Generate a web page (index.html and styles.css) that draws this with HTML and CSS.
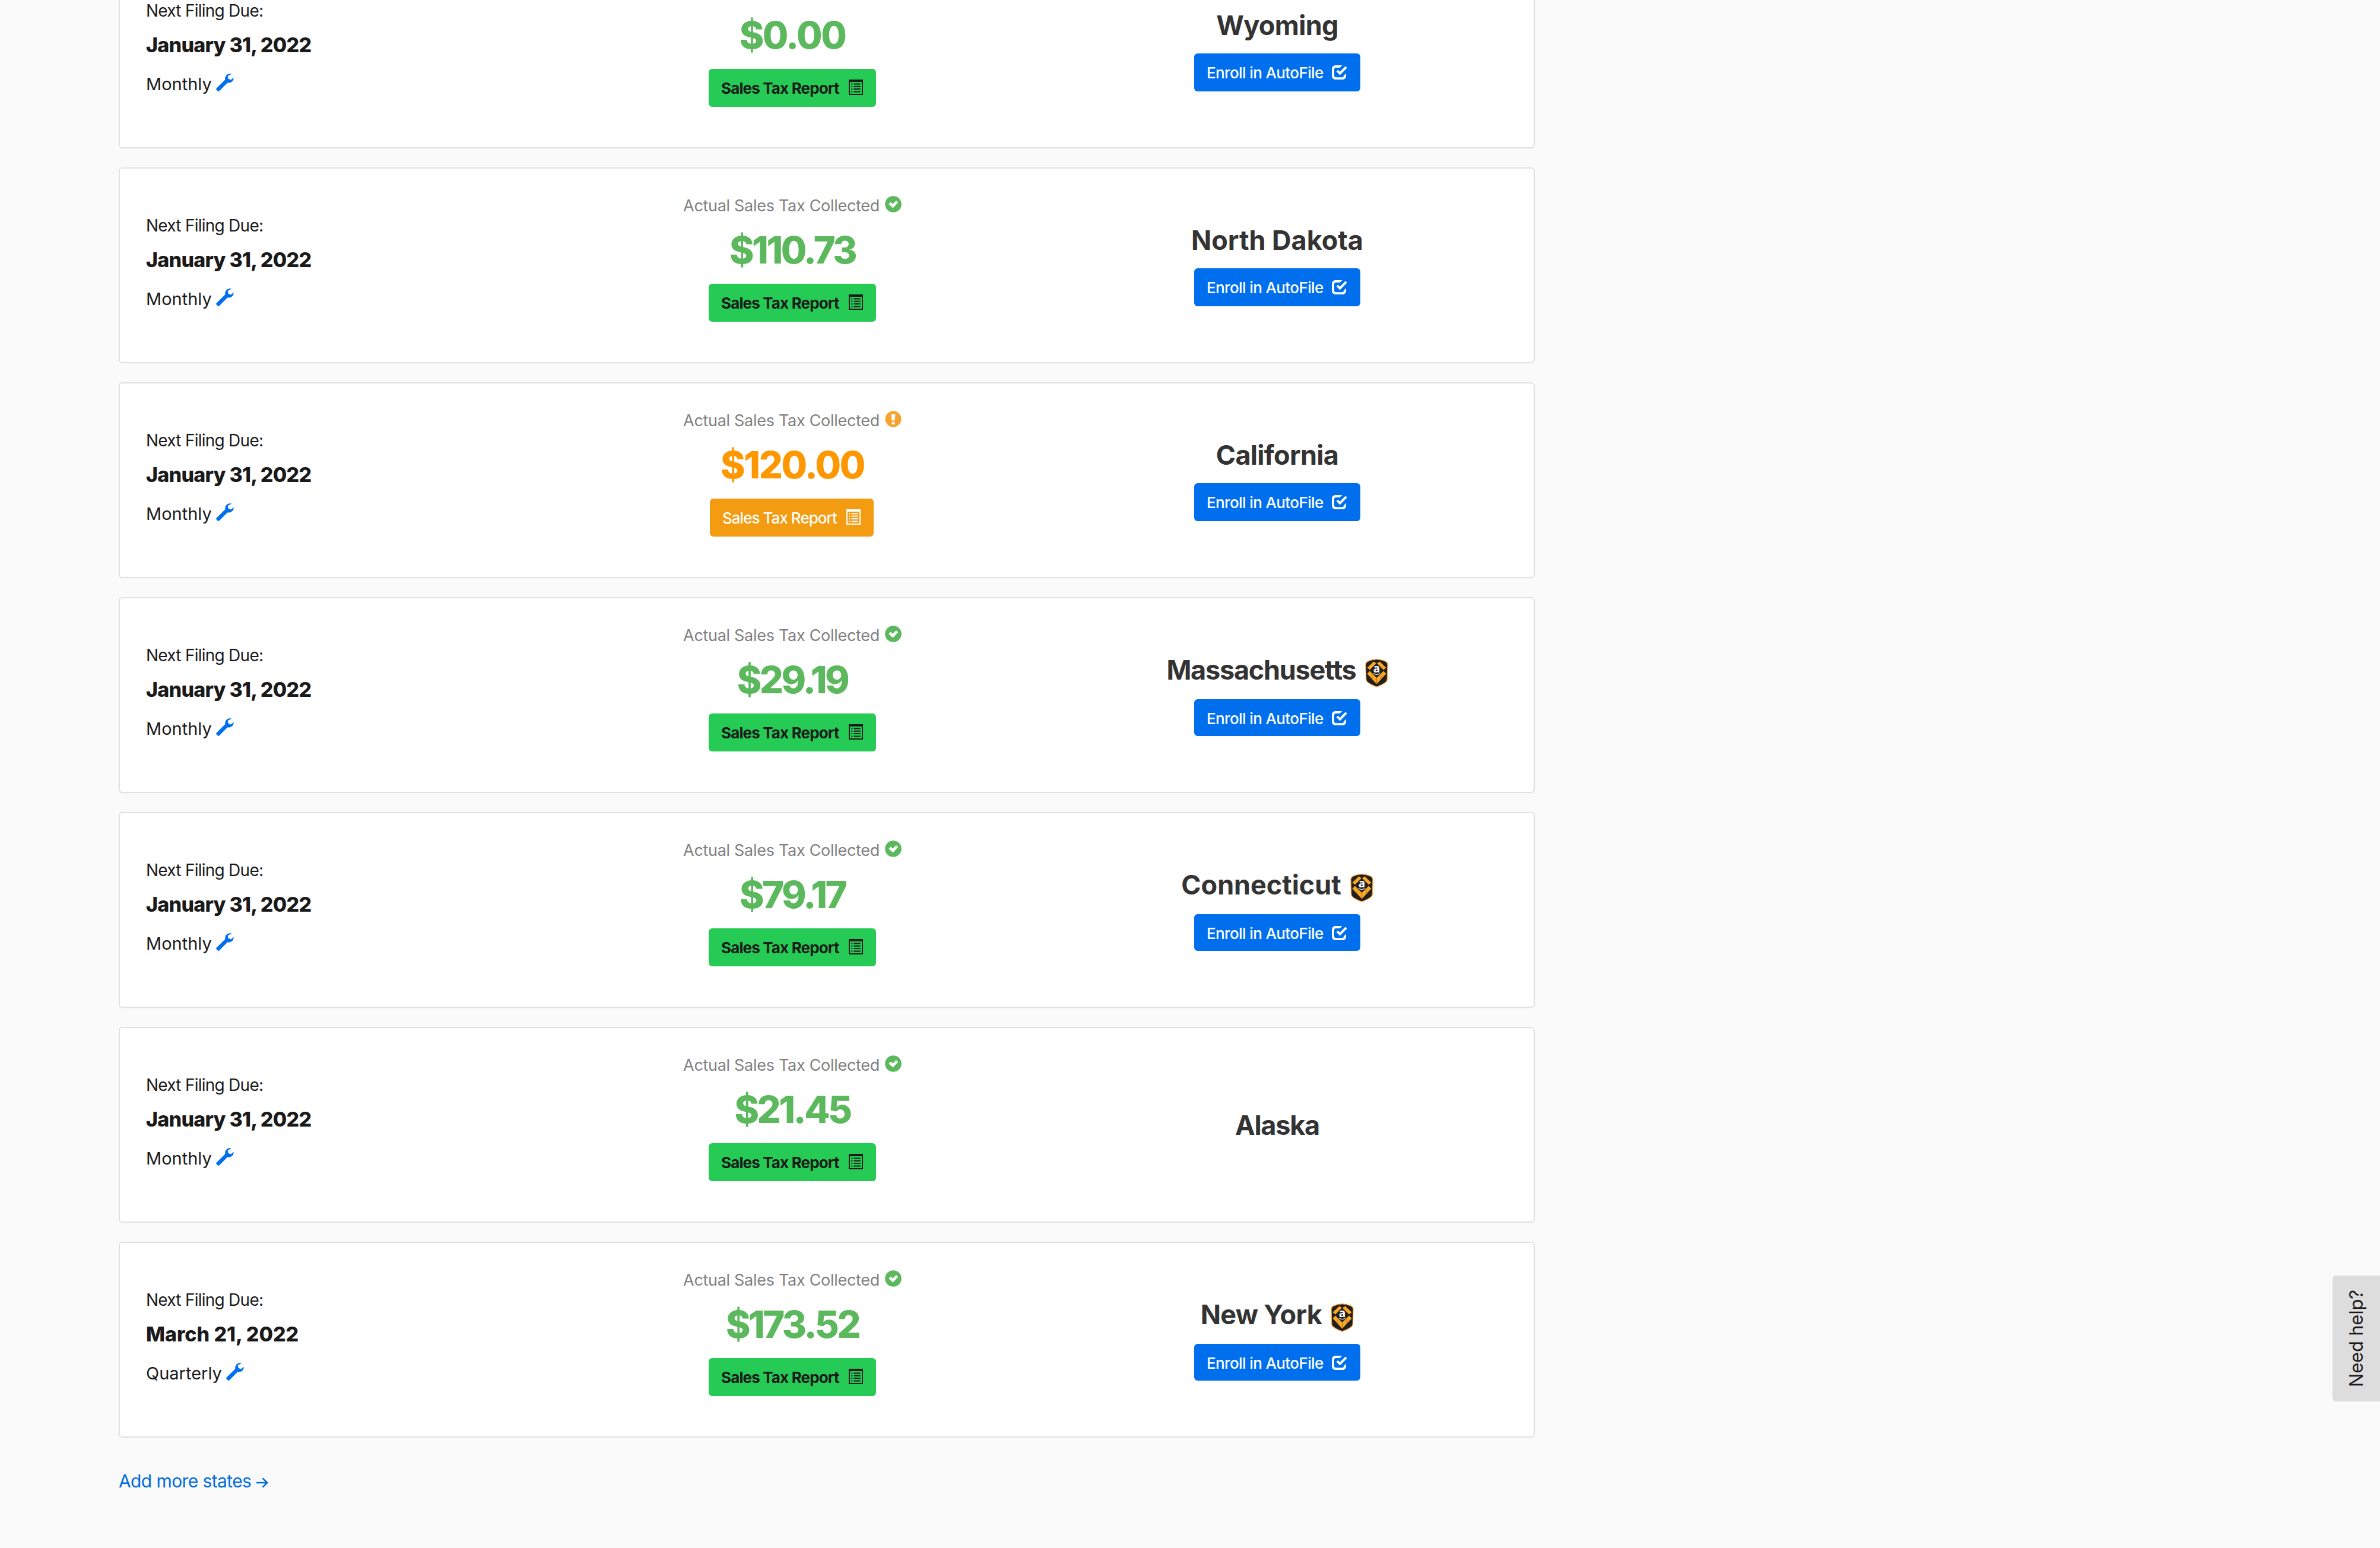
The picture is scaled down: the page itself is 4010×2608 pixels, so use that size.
FILE: index.html
```
<!DOCTYPE html>
<html lang="en">
<head>
    <meta charset="UTF-8">
    <meta name="viewport" content="width=device-width, initial-scale=1.0">
    <title>Sales Tax Filings</title>
    <link rel="stylesheet" href="styles.css">
</head>
<body>
    <!-- Shared icons -->
    <svg class="icon-defs">
        <symbol id="wrench" viewBox="0 0 30 30">
            <path d="M26 .7C21-1 14.6 2.4 15.3 10.2L.9 24.6c-1 1-.9 1.9-.1 2.7l2 2c.8.8 1.8.8 2.7-.1L19.2 15.4C25.4 16.4 30.2 12 29.6 6.8L25 10.6l-4.4-1.8-.9-4.5z"/>
        </symbol>
        <symbol id="list" viewBox="0 0 24 26">
            <path fill-rule="evenodd" d="M0 0h24v26H0zM2 4v20h20V4z"/>
            <path d="M4.3 6.5h2v2h-2zM8.5 6.5h11.2v2H8.5zM4.3 10.8h2v2h-2zM8.5 10.8h11.2v2H8.5zM4.3 15.1h2v2h-2zM8.5 15.1h11.2v2H8.5zM4.3 19.4h2v2h-2zM8.5 19.4h11.2v2H8.5z"/>
        </symbol>
        <symbol id="ok" viewBox="0 0 28 28">
            <circle cx="14" cy="14" r="13.8"/>
            <path fill="#fff" d="M6.3 14l3.6-3.5 3.3 3.2L18.9 8l3.4 3.3-8.8 9.3z"/>
        </symbol>
        <symbol id="alert" viewBox="0 0 28 28">
            <circle cx="14" cy="14" r="13.5"/>
            <path fill="#fff" d="M10.5 6h7l-1.2 10.5h-4.6zM11.6 18.8h4.8v4.2h-4.8z"/>
        </symbol>
        <symbol id="check" viewBox="0 0 26 24">
            <path d="M17.5 0H7C2.5 0 0 2.5 0 7v10c0 4.5 2.5 7 7 7h10.500c4.500 0 6.500-2.500 6.500-6.500V13.500l-4 4c0 2-.8 2.700-2.500 2.700H7c-2 0-3-1-3-3V7c0-2 1-3 3-3h6.500z"/>
            <path d="M7.600 10.500l2.700-2.700 3.300 3.300 9.300-9.600L25.700 4.300 13.600 16.500z"/>
        </symbol>
        <symbol id="shield" viewBox="0 0 39 48">
            <path fill="#231f20" stroke="#f0a33a" stroke-width="1.3" d="M19.500.8c6 0 10.500 1.500 14.500 3.400 2.800 1.300 4 3 4 6L37.300 34c-.1 2.700-.9 4.300-3 5.700-4.200 3-9 5.500-14.800 7.500C13.700 45.200 8.900 42.700 4.700 39.700c-2.100-1.400-2.900-3-3-5.700L1 10.200c0-3 1.200-4.700 4-6C9 2.300 13.500.8 19.500.8z"/>
            <path fill="#f9a825" d="M14.5 4.500l4.500 3L8 18.500l-4.500-3.500zM24.500 4.500l-4.500 3L31 18.500l4.500-3.500zM8 20.500L19.500 32 31 20.500l4.500 4.500-16 17.500L3.500 25z"/>
            <path stroke="#a8670f" stroke-width=".8" fill="none" d="M19.500 32v10M12 27v6M27 27v6"/>
            <path stroke="#fff" stroke-width="1.2" fill="none" d="M14 24.500q5.500 4 11 0"/>
            <text x="19.500" y="22.500" fill="#fff" class="shield-letter">a</text>
        </symbol>
    </svg>

    <div class="filings">
        <div class="card">
            <div class="due">
                <div class="due-label">Next Filing Due:</div>
                <div class="due-date">January 31, 2022</div>
                <div class="frequency">Monthly <svg class="wrench"><use href="#wrench"/></svg></div>
            </div>
            <div class="collected no-label">
                <div class="amount amount-round">$0.00</div>
                <a class="btn btn-green"><span>Sales Tax Report</span><svg class="list"><use href="#list"/></svg></a>
            </div>
            <div class="state">
                <div class="state-name">Wyoming</div>
                <a class="btn btn-blue"><span>Enroll in AutoFile</span><svg class="check"><use href="#check"/></svg></a>
            </div>
        </div>

        <div class="card">
            <div class="due">
                <div class="due-label">Next Filing Due:</div>
                <div class="due-date">January 31, 2022</div>
                <div class="frequency">Monthly <svg class="wrench"><use href="#wrench"/></svg></div>
            </div>
            <div class="collected">
                <div class="collected-label">Actual Sales Tax Collected <svg class="status"><use href="#ok"/></svg></div>
                <div class="amount">$110.73</div>
                <a class="btn btn-green"><span>Sales Tax Report</span><svg class="list"><use href="#list"/></svg></a>
            </div>
            <div class="state">
                <div class="state-name state-name-wide">North Dakota</div>
                <a class="btn btn-blue"><span>Enroll in AutoFile</span><svg class="check"><use href="#check"/></svg></a>
            </div>
        </div>

        <div class="card">
            <div class="due">
                <div class="due-label">Next Filing Due:</div>
                <div class="due-date">January 31, 2022</div>
                <div class="frequency">Monthly <svg class="wrench"><use href="#wrench"/></svg></div>
            </div>
            <div class="collected warning">
                <div class="collected-label">Actual Sales Tax Collected <svg class="status"><use href="#alert"/></svg></div>
                <div class="amount amount-round">$120.00</div>
                <a class="btn btn-orange"><span>Sales Tax Report</span><svg class="list"><use href="#list"/></svg></a>
            </div>
            <div class="state">
                <div class="state-name">California</div>
                <a class="btn btn-blue"><span>Enroll in AutoFile</span><svg class="check"><use href="#check"/></svg></a>
            </div>
        </div>

        <div class="card">
            <div class="due">
                <div class="due-label">Next Filing Due:</div>
                <div class="due-date">January 31, 2022</div>
                <div class="frequency">Monthly <svg class="wrench"><use href="#wrench"/></svg></div>
            </div>
            <div class="collected">
                <div class="collected-label">Actual Sales Tax Collected <svg class="status"><use href="#ok"/></svg></div>
                <div class="amount">$29.19</div>
                <a class="btn btn-green"><span>Sales Tax Report</span><svg class="list"><use href="#list"/></svg></a>
            </div>
            <div class="state has-shield">
                <div class="state-name state-name-tight">Massachusetts <svg class="shield"><use href="#shield"/></svg></div>
                <a class="btn btn-blue"><span>Enroll in AutoFile</span><svg class="check"><use href="#check"/></svg></a>
            </div>
        </div>

        <div class="card">
            <div class="due">
                <div class="due-label">Next Filing Due:</div>
                <div class="due-date">January 31, 2022</div>
                <div class="frequency">Monthly <svg class="wrench"><use href="#wrench"/></svg></div>
            </div>
            <div class="collected">
                <div class="collected-label">Actual Sales Tax Collected <svg class="status"><use href="#ok"/></svg></div>
                <div class="amount">$79.17</div>
                <a class="btn btn-green"><span>Sales Tax Report</span><svg class="list"><use href="#list"/></svg></a>
            </div>
            <div class="state has-shield">
                <div class="state-name state-name-wide">Connecticut <svg class="shield"><use href="#shield"/></svg></div>
                <a class="btn btn-blue"><span>Enroll in AutoFile</span><svg class="check"><use href="#check"/></svg></a>
            </div>
        </div>

        <div class="card">
            <div class="due">
                <div class="due-label">Next Filing Due:</div>
                <div class="due-date">January 31, 2022</div>
                <div class="frequency">Monthly <svg class="wrench"><use href="#wrench"/></svg></div>
            </div>
            <div class="collected">
                <div class="collected-label">Actual Sales Tax Collected <svg class="status"><use href="#ok"/></svg></div>
                <div class="amount">$21.45</div>
                <a class="btn btn-green"><span>Sales Tax Report</span><svg class="list"><use href="#list"/></svg></a>
            </div>
            <div class="state state-only">
                <div class="state-name state-name-tight">Alaska</div>
            </div>
        </div>

        <div class="card">
            <div class="due">
                <div class="due-label">Next Filing Due:</div>
                <div class="due-date due-date-wide">March 21, 2022</div>
                <div class="frequency">Quarterly <svg class="wrench"><use href="#wrench"/></svg></div>
            </div>
            <div class="collected">
                <div class="collected-label">Actual Sales Tax Collected <svg class="status"><use href="#ok"/></svg></div>
                <div class="amount">$173.52</div>
                <a class="btn btn-green"><span>Sales Tax Report</span><svg class="list"><use href="#list"/></svg></a>
            </div>
            <div class="state has-shield">
                <div class="state-name">New York <svg class="shield"><use href="#shield"/></svg></div>
                <a class="btn btn-blue"><span>Enroll in AutoFile</span><svg class="check"><use href="#check"/></svg></a>
            </div>
        </div>

        <a class="add-states">Add more states
            <svg class="arrow" viewBox="0 0 20 18"><path d="M0 9h18M10.500 1.300L18.200 9l-7.700 7.700"/></svg>
        </a>
    </div>

    <div class="help-tab">Need help?</div>
</body>
</html>
```

FILE: styles.css
```
* {
    box-sizing: border-box;
}

body {
    margin: 0;
    height: 2608px;
    overflow: hidden;
    background-color: #fafafa;
    color: #1a1a1a;
    font-family: Inter, "Liberation Sans", sans-serif;
}

svg {
    fill: currentColor;
    flex: none;
}

.icon-defs {
    display: none;
}

/* The list is scrolled, so the first card is cut off at the top */
.filings {
    width: 2386px;
    margin: -80px 0 0 200px;
    display: flex;
    flex-direction: column;
    align-items: flex-start;
    gap: 32px;
}

.card {
    width: 2386px;
    height: 330px;
    display: grid;
    grid-template-columns: 680px 818px 816px;
    padding-left: 44px;
    background-color: white;
    border: 2px solid #e1e1e1;
    border-radius: 6px;
    box-shadow: 0 2px 2px rgba(0, 0, 0, 0.01);
}

/* Left column */
.due {
    padding-top: 74px;
}

.due-label {
    font-size: 28px;
    line-height: 44px;
    letter-spacing: -0.75px;
}

.due-date {
    font-size: 34px;
    font-weight: 800;
    line-height: 71px;
    letter-spacing: -0.75px;
}

.due-date-wide {
    letter-spacing: -0.05px;
}

.frequency {
    display: flex;
    font-size: 29px;
    line-height: 61px;
}

.wrench {
    width: 30px;
    height: 30px;
    margin: 13px 0 0 7px;
    color: #006fee;
}

/* Middle column */
.collected {
    display: flex;
    flex-direction: column;
    align-items: center;
    padding-top: 42px;
    color: #5cb85c;
}

.no-label {
    padding-top: 82px;
}

.collected-label {
    display: flex;
    gap: 9px;
    font-size: 27px;
    line-height: 41px;
    height: 40px;
    letter-spacing: -0.3px;
    color: #808080;
}

.status {
    width: 28px;
    height: 28px;
    margin-top: 4px;
    color: #5cb85c;
}

.amount {
    font-size: 63px;
    font-weight: 800;
    line-height: 110px;
    letter-spacing: -3.5px;
}

.amount-round {
    letter-spacing: -2.4px;
}

.warning .status {
    color: #f6a42f;
}

.warning .amount {
    color: #ff9800;
}

/* Buttons */
.btn {
    display: flex;
    justify-content: space-between;
    height: 64px;
    padding: 0 22px 0 21px;
    border-radius: 6px;
    font-size: 26px;
    line-height: 66px;
    white-space: nowrap;
}

.btn-green {
    width: 282px;
    margin-top: 2px;
    background-color: #25cb55;
    color: #1a1a1a;
    font-weight: 700;
    letter-spacing: -0.85px;
}

.btn-orange {
    width: 276px;
    margin: 2px 2px 0 0;
    background-color: #f39c12;
    color: white;
    font-weight: 500;
    letter-spacing: -0.97px;
}

.btn-blue {
    width: 280px;
    margin-top: 18px;
    background-color: #006fee;
    color: white;
    font-weight: 500;
    letter-spacing: -0.62px;
}

.list {
    width: 24px;
    height: 26px;
    margin-top: 18px;
}

.check {
    width: 26px;
    height: 24px;
    margin-top: 20px;
}

/* Right column */
.state {
    display: flex;
    flex-direction: column;
    align-items: center;
    padding-top: 90px;
}

.state-name {
    display: flex;
    gap: 15px;
    height: 60px;
    font-size: 45px;
    font-weight: 700;
    line-height: 61px;
    letter-spacing: -0.7px;
    color: #333;
}

.state-name-tight {
    letter-spacing: -1.25px;
}

.state-name-wide {
    letter-spacing: -0.05px;
}

.shield {
    width: 39px;
    height: 48px;
    margin-top: 12px;
}

.shield-letter {
    font: bold 19px "Open Sans", sans-serif;
    letter-spacing: 0;
    text-anchor: middle;
}

.has-shield .btn {
    height: 62px;
    margin-top: 20px;
    line-height: 66px;
}

.state-only {
    justify-content: center;
    padding-top: 0;
}

.add-states {
    display: flex;
    gap: 9px;
    margin-top: 11px;
    color: #006bdd;
    font-size: 30px;
    line-height: 60px;
    letter-spacing: -0.6px;
}

.arrow {
    width: 20px;
    height: 18px;
    margin-top: 24px;
    fill: none;
    stroke: currentColor;
    stroke-width: 2.6px;
}

/* Help tab stuck to the right edge */
.help-tab {
    position: absolute;
    right: 0;
    top: 2149px;
    width: 80px;
    height: 212px;
    background-color: #ddd;
    border-radius: 0 6px 6px 0;
    font-size: 31px;
    line-height: 80px;
    letter-spacing: -0.2px;
    text-align: center;
    writing-mode: vertical-rl;
    transform: rotate(180deg);
}
```
